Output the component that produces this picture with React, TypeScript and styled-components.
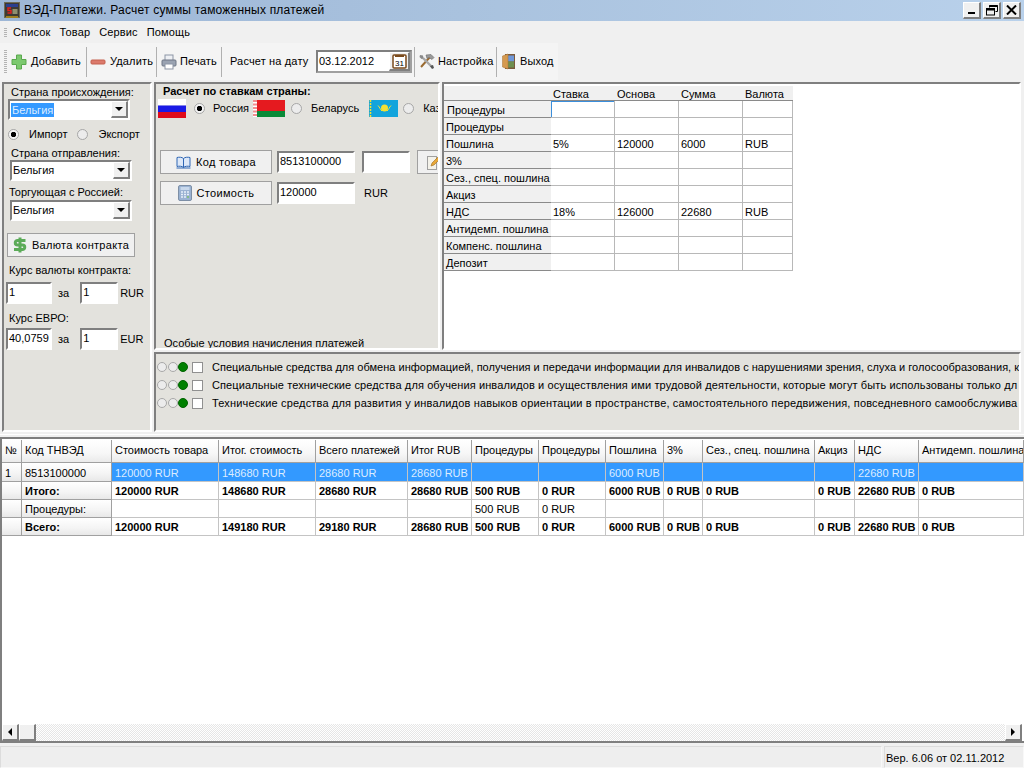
import React from 'react';
import styled, { createGlobalStyle, css } from 'styled-components';

const Global = createGlobalStyle`
  html, body { margin: 0; padding: 0; background: #f0f0f0; }
  * { box-sizing: border-box; }
  svg { flex: none; }
  body { font: 11px/13px "Liberation Sans", Arial, sans-serif; color: #000; }
`;

const sunken = css`
  border-style: solid;
  border-width: 2px;
  border-color: #7f7f7f #fff #fff #7f7f7f;
`;
const raised = css`
  border-style: solid;
  border-width: 1px 2px 2px 1px;
  border-color: #fff #7f7f7f #7f7f7f #fff;
`;

const Window = styled.div`
  width: 1024px;
  height: 768px;
  overflow: hidden;
  display: flex;
  flex-direction: column;
`;

/* ---- title bar ---- */
const TitleBar = styled.div`
  height: 21px;
  flex: none;
  display: flex;
  align-items: center;
  padding: 0 3px 0 4px;
  background: linear-gradient(90deg, #9db6d6 0%, #a9c2de 45%, #b9d1eb 100%);
`;
const TitleText = styled.span`
  margin-left: 4px;
  flex: 1;
  font-size: 12px;
  letter-spacing: 0.2px;
`;
const WinButton = styled.button`
  width: 18px;
  height: 17px;
  margin-left: 2px;
  padding: 0;
  background: #f0f0f0;
  ${raised}
  display: flex;
  align-items: center;
  justify-content: center;
`;

/* ---- menu and toolbar ---- */
const MenuBar = styled.div`
  height: 22px;
  flex: none;
  display: flex;
  align-items: center;
  padding: 1px 0 0 4px;
  background: #f0f0f0;
`;
const Grip = styled.i<{ $h: number }>`
  width: 3px;
  height: ${p => p.$h}px;
  flex: none;
  background: repeating-linear-gradient(#b4b4b4 0 1px, transparent 1px 2px);
`;
const MenuItem = styled.span`
  margin-left: 6px;
  margin-right: 3px;
  letter-spacing: 0.15px;
`;
const ToolBar = styled.div`
  height: 37px;
  width: 558px;
  flex: none;
  display: flex;
  align-items: center;
  padding-left: 4px;
  background: #f4f4f4;
`;
const ToolButton = styled.div<{ $w: number; $pad: number; $gap?: number }>`
  width: ${p => p.$w}px;
  height: 30px;
  flex: none;
  display: flex;
  align-items: center;
  gap: ${p => p.$gap ?? 3}px;
  padding-left: ${p => p.$pad}px;
  letter-spacing: 0.15px;
  white-space: nowrap;
`;
const ToolSep = styled.i`
  width: 1px;
  height: 30px;
  flex: none;
  background: #b0b0b0;
  margin-right: 1px;
`;
const DateEdit = styled.div`
  width: 96px;
  height: 23px;
  flex: none;
  display: flex;
  align-items: center;
  justify-content: space-between;
  padding-left: 1px;
  background: #fff;
  border-style: solid;
  border-width: 2px;
  border-color: #7f7f7f #a0a0a0 #a0a0a0 #7f7f7f;
`;
const DateBtn = styled.span`
  width: 21px;
  height: 19px;
  background: #f0f0f0;
  ${raised}
  display: flex;
  align-items: center;
  justify-content: center;
`;

/* ---- upper part ---- */
const Upper = styled.div`
  height: 355px;
  flex: none;
  display: flex;
  padding: 2px 3px 2px 2px;
  gap: 2px;
  background: #f0f0f0;
  border-bottom: 1px solid #fff;
`;
const LeftPanel = styled.div`
  width: 150px;
  flex: none;
  ${sunken}
  background: #e3e2dd;
  padding: 2px 0 0 4px;
  display: flex;
  flex-direction: column;
`;
const RightSide = styled.div`
  flex: 1;
  min-width: 0;
  display: flex;
  flex-direction: column;
  gap: 2px;
`;
const TopRow = styled.div`
  height: 268px;
  flex: none;
  display: flex;
  gap: 2px;
`;
const MidPanel = styled.div`
  width: 286px;
  flex: none;
  overflow: hidden;
  ${sunken}
  background: #e3e2dd;
  display: flex;
  flex-direction: column;
  padding: 0 0 0 2px;
`;
const FieldLabel = styled.div<{ $ml?: number; $mt?: number; $mb?: number }>`
  margin-left: ${p => p.$ml ?? 0}px;
  margin-top: ${p => p.$mt ?? 0}px;
  margin-bottom: ${p => p.$mb ?? 0}px;
  white-space: nowrap;
`;
const Combo = styled.div<{ $w: number; $ml?: number }>`
  width: ${p => p.$w}px;
  margin-left: ${p => p.$ml ?? 0}px;
  height: 21px;
  flex: none;
  ${sunken}
  background: #fff;
  display: flex;
  align-items: center;
  justify-content: space-between;
  padding-left: 1px;
`;
const Selected = styled.span`
  background: #3399ff;
  color: #dcecff;
  padding: 0 1px;
  line-height: 14px;
`;
const ComboBtn = styled.span`
  width: 17px;
  height: 17px;
  background: #f0f0f0;
  ${raised}
  display: flex;
  align-items: center;
  justify-content: center;
  &::after {
    content: '';
    border: 4px solid transparent;
    border-top: 4px solid #000;
    border-bottom: 0;
  }
`;
const RadioRow = styled.div<{ $mt?: number; $ml?: number }>`
  display: flex;
  align-items: center;
  margin-top: ${p => p.$mt ?? 0}px;
  margin-left: ${p => p.$ml ?? 0}px;
  white-space: nowrap;
`;
const Radio = styled.span<{ $on?: boolean; $ml: number; $mr: number }>`
  width: 11px;
  height: 11px;
  flex: none;
  margin-left: ${p => p.$ml}px;
  margin-right: ${p => p.$mr}px;
  border-radius: 50%;
  border: 1px solid #a6a6a6;
  background: ${p => (p.$on ? 'radial-gradient(circle, #000 0 2.4px, #f4f4f4 3px)' : '#ececec')};
`;
const FlagGap = styled.span<{ $w: number }>`
  width: ${p => p.$w}px;
  flex: none;
`;
const PushButton = styled.div<{ $w: number; $ml?: number; $mt?: number }>`
  width: ${p => p.$w}px;
  height: 24px;
  flex: none;
  margin-left: ${p => p.$ml ?? 0}px;
  margin-top: ${p => p.$mt ?? 0}px;
  background: #f0f0f0;
  border: 1px solid #a0a0a0;
  display: flex;
  align-items: center;
  justify-content: center;
  gap: 5px;
  letter-spacing: 0.3px;
  white-space: nowrap;
`;
const Row = styled.div<{ $mt?: number; $ml?: number }>`
  display: flex;
  align-items: center;
  margin-top: ${p => p.$mt ?? 0}px;
  margin-left: ${p => p.$ml ?? 0}px;
`;
const Edit = styled.div<{ $w: number; $ml?: number }>`
  width: ${p => p.$w}px;
  height: 22px;
  flex: none;
  margin-left: ${p => p.$ml ?? 0}px;
  ${sunken}
  background: #fff;
  padding: 1px 0 0 1px;
  line-height: 14px;
`;
const Unit = styled.span<{ $ml: number }>`
  margin-left: ${p => p.$ml}px;
`;
const PanelTitle = styled.div`
  margin: 1px 0 0 5px;
  font-weight: 700;
`;
const Spacer = styled.div`
  flex: 1;
`;
const FootNote = styled.div`
  margin: 0 0 -2px 6px;
  white-space: nowrap;
`;

/* ---- rate grid ---- */
const GridPanel = styled.div`
  flex: 1;
  min-width: 0;
  ${sunken}
  background: #fff;
  padding-top: 2px;
`;
const RateGrid = styled.div`
  width: 349px;
  display: grid;
  grid-template-columns: 107px 64px 64px 64px 50px;
  grid-auto-rows: 17px;
  grid-template-rows: 15px;
`;
const RateHead = styled.div`
  background: #f0f0f0;
  border-bottom: 1px solid #8a8a8a;
  padding: 1px 0 0 2px;
  line-height: 15px;
  overflow: hidden;
`;
const RateLabel = styled.div<{ $first?: boolean }>`
  background: #f0f0f0;
  border-bottom: 1px solid #8a8a8a;
  padding: 2px 0 0 ${p => (p.$first ? 3 : 2)}px;
  line-height: 14px;
  white-space: nowrap;
`;
const RateCell = styled.div<{ $focus?: boolean }>`
  border-right: 1px solid #b8b8b8;
  border-bottom: 1px solid #b8b8b8;
  padding: 2px 0 0 2px;
  line-height: 14px;
  ${p => p.$focus && css`box-shadow: inset 1px 1px 0 #3a8edb;`}
`;

/* ---- conditions ---- */
const CondPanel = styled.div`
  flex: 1;
  min-height: 0;
  overflow: hidden;
  ${sunken}
  background: #e3e2dd;
  padding: 4px 0 0 1px;
`;
const CondRow = styled.div`
  height: 18px;
  display: flex;
  align-items: center;
  white-space: nowrap;
`;
const Lamp = styled.span<{ $on?: boolean }>`
  width: 10px;
  height: 10px;
  flex: none;
  margin-right: 0.5px;
  border-radius: 50%;
  border: 1px solid ${p => (p.$on ? '#006400' : '#a8a8a8')};
  background: ${p => (p.$on ? '#008000' : '#ececec')};
`;
const CheckBox = styled.span`
  width: 11px;
  height: 11px;
  flex: none;
  margin: 0 9px 0 3.5px;
  background: #fff;
  border: 1px solid #909090;
`;
const CondText = styled.span<{ $ls: number }>`
  letter-spacing: ${p => p.$ls}px;
`;

/* ---- payments table ---- */
const TableBox = styled.div`
  height: 306px;
  flex: none;
  margin-top: 2px;
  background: #fff;
  border-style: solid;
  border-width: 2px 0 2px 2px;
  border-color: #7f7f7f;
  display: flex;
  flex-direction: column;
  overflow: hidden;
`;
const TableView = styled.div`
  flex: 1;
  overflow: hidden;
`;
const Table = styled.table`
  width: 1022px;
  margin-top: 1px;
  table-layout: fixed;
  border-collapse: separate;
  border-spacing: 0;
`;
const Th = styled.th`
  height: 23px;
  padding: 0 0 2px 3px;
  font-weight: 400;
  text-align: left;
  white-space: nowrap;
  overflow: hidden;
  background: linear-gradient(#fff, #f7f7f7 60%, #eaeaea);
  border-right: 1px solid #a0a0a0;
  border-bottom: 1px solid #a0a0a0;
`;
const Td = styled.td<{ $bold?: boolean; $sel?: boolean; $fixed?: boolean; $h: number }>`
  height: ${p => p.$h}px;
  padding: 2px 0 0 3px;
  white-space: nowrap;
  overflow: hidden;
  font-weight: ${p => (p.$bold ? 700 : 400)};
  background: ${p =>
    p.$sel ? '#3399ff' : p.$fixed ? 'linear-gradient(#fff, #f4f4f4 60%, #e8e8e8)' : '#fff'};
  color: ${p => (p.$sel ? '#dcecff' : '#000')};
  border-right: 1px solid ${p => (p.$fixed ? '#a0a0a0' : '#c4c4c4')};
  border-bottom: 1px solid ${p => (p.$fixed ? '#a0a0a0' : '#c4c4c4')};
`;
const ScrollBar = styled.div`
  height: 17px;
  flex: none;
  margin-right: 2px;
  display: flex;
  justify-content: space-between;
  background-color: #fff;
  background-image: conic-gradient(#e6e6e6 25%, #fff 0 50%, #e6e6e6 0 75%, #fff 0);
  background-size: 2px 2px;
`;
const ScrollThumb = styled.span`
  width: 17px;
  height: 17px;
  flex: none;
  background: #f0f0f0;
  ${raised}
  display: flex;
  align-items: center;
  justify-content: center;
`;
const ScrollGroup = styled.div`
  display: flex;
`;
const Arrow = styled.i<{ $dir: 'l' | 'r' }>`
  border: 4px solid transparent;
  ${p => (p.$dir === 'l'
    ? css`border-right: 4px solid #000; border-left: 0;`
    : css`border-left: 4px solid #000; border-right: 0;`)}
`;

/* ---- status bar ---- */
const StatusBar = styled.div`
  flex: 1;
  margin-top: 3px;
  display: flex;
  gap: 2px;
`;
const StatusCell = styled.div<{ $w?: number }>`
  ${p => (p.$w ? css`width: ${p.$w}px; flex: none;` : css`flex: 1;`)}
  background: #eeeeee;
  border-style: solid;
  border-width: 1px;
  border-color: #dcdcdc #f8f8f8 #f8f8f8 #dcdcdc;
  padding: 5px 0 0 1px;
`;

/* ---- icons ---- */
const AppIcon = () => (
  <svg width="16" height="17" viewBox="0 0 16 17">
    <rect x="0.5" y="0.5" width="15" height="15" fill="#3c3a34" stroke="#6f6a55" />
    <rect x="2" y="2" width="12" height="3" fill="#2b3f8f" />
    <path d="M7 6H4v2.500h3V11H3.500" fill="none" stroke="#e02020" strokeWidth="1.500" />
    <rect x="8.500" y="7" width="5" height="5" fill="#8f8f6f" />
    <rect x="2" y="14" width="12" height="2" fill="#a08020" />
  </svg>
);
const PlusIcon = () => (
  <svg width="16" height="16" viewBox="0 0 16 16">
    <path d="M5.5 1h5v4.500H15v5h-4.500V15h-5v-4.500H1v-5h4.500z" fill="#7cc96f" stroke="#5aa84e" />
  </svg>
);
const MinusIcon = () => (
  <svg width="16" height="16" viewBox="0 0 16 16">
    <rect x="1" y="6" width="14" height="4" rx="1" fill="#dc7a6c" stroke="#c4604f" />
  </svg>
);
const PrintIcon = () => (
  <svg width="16" height="16" viewBox="0 0 16 16">
    <rect x="4" y="1" width="8" height="6" fill="#eef0f4" stroke="#8c95a5" />
    <rect x="1" y="6" width="14" height="6" rx="1" fill="#9aa3b2" stroke="#6e7786" />
    <rect x="4" y="10" width="8" height="5" fill="#fff" stroke="#8c95a5" />
  </svg>
);
const ToolsIcon = () => (
  <svg width="17" height="17" viewBox="0 0 17 17">
    <path d="M3 14L12 4" stroke="#9a6a30" strokeWidth="2" />
    <path d="M8 2l5-.5 3 3-2 2-3-2-2 1z" fill="#9a9a9a" stroke="#6a6a6a" strokeWidth="0.6" />
    <path d="M14 14L5 5" stroke="#a8a8a8" strokeWidth="2.400" />
    <path d="M2 2l3 .5.500 3-2 .5-2-2z" fill="#8a8a8a" />
    <path d="M12 13l3-1 1 3-2 1z" fill="#555" />
  </svg>
);
const DoorIcon = () => (
  <svg width="14" height="17" viewBox="0 0 14 17">
    <rect x="3" y="1" width="10" height="15" fill="#7a5a3c" />
    <rect x="5" y="2.500" width="7" height="6" fill="#6f97d8" />
    <rect x="5" y="8.500" width="7" height="6" fill="#6f8f4f" />
    <path d="M0.500 3L6 1v15l-5.500-2z" fill="#d59a50" stroke="#a87030" strokeWidth="0.5" />
  </svg>
);
const CalendarIcon = () => (
  <svg width="15" height="15" viewBox="0 0 15 15">
    <rect x="1" y="1" width="13" height="13" rx="1" fill="#fff" stroke="#7a4a1c" strokeWidth="1.500" />
    <rect x="3" y="1" width="9" height="2" fill="#7a4a1c" />
    <text x="7.500" y="12" fontSize="8" textAnchor="middle" fontFamily="Liberation Sans">31</text>
  </svg>
);
const DollarIcon = () => (
  <svg width="14" height="16" viewBox="0 0 14 16">
    <path d="M7 0.500v15" stroke="#5cab58" strokeWidth="3" />
    <path d="M12.500 3.500H4.500a2.200 2.200 0 000 4.500h5a2.200 2.200 0 010 4.500H1" fill="none" stroke="#5cab58" strokeWidth="3" />
  </svg>
);
const BookIcon = () => (
  <svg width="15" height="13" viewBox="0 0 15 13">
    <path d="M7.500 2.500C6 1 3 1 1 1.500v9c2-.5 5-.5 6.500 1 1.500-1.500 4.500-1.500 6.500-1v-9c-2-.5-5-.5-6.500 1z" fill="#dde8f8" stroke="#2f66b5" />
    <path d="M7.500 2.500v9" stroke="#2f66b5" />
    <path d="M0.500 12h14" stroke="#2f66b5" />
  </svg>
);
const CalcIcon = () => (
  <svg width="14" height="16" viewBox="0 0 14 16">
    <rect x="0.500" y="0.500" width="13" height="15" rx="1.500" fill="#9ab2d2" stroke="#7d8fa6" />
    <rect x="2.500" y="2" width="9" height="3" fill="#c8d8ec" />
    <path d="M3 7h2M6 7h2M9 7h2M3 9.500h2M6 9.500h2M9 9.500h2M3 12h2M6 12h2" stroke="#e8f0fa" strokeWidth="1.400" />
    <path d="M9 12h2" stroke="#7fbf6f" strokeWidth="1.400" />
  </svg>
);
const PencilIcon = () => (
  <svg width="14" height="16" viewBox="0 0 14 16">
    <rect x="0.500" y="2.500" width="9" height="13" fill="#f4f2ea" stroke="#a0a0a0" />
    <path d="M4 12l1-3 7-7 2 2-7 7z" fill="#e8a838" stroke="#9a6a20" strokeWidth="0.6" />
  </svg>
);
const FlagRU = () => (
  <svg width="28" height="19" viewBox="0 0 28 19">
    <rect width="28" height="6.500" fill="#fff" />
    <rect y="6.500" width="28" height="6.500" fill="#1a1ae6" />
    <rect y="13" width="28" height="6" fill="#e00b1c" />
  </svg>
);
const FlagBY = () => (
  <svg width="32" height="17" viewBox="0 0 32 17">
    <rect width="32" height="11" fill="#e51a1f" />
    <rect y="11" width="32" height="6" fill="#0a8a38" />
    <rect width="4" height="17" fill="#fff" />
    <path d="M1 0v17M3 0v17" stroke="#e51a1f" strokeDasharray="2 1.500" />
  </svg>
);
const FlagKZ = () => (
  <svg width="29" height="17" viewBox="0 0 29 17">
    <rect width="29" height="17" fill="#12a4dc" />
    <circle cx="15.500" cy="8" r="3.500" fill="#f4e034" />
    <path d="M9 5.500c2 2 2 4 4 5.500M22 5.500c-2 2-2 4-4 5.500" stroke="#f4e034" fill="none" />
    <path d="M1.500 0v17" stroke="#f4e034" strokeDasharray="2 1" strokeWidth="1.500" />
  </svg>
);

/* ---- data ---- */
const rateRows: [string, string, string, string, string][] = [
  ['Процедуры', '', '', '', ''],
  ['Процедуры', '', '', '', ''],
  ['Пошлина', '5%', '120000', '6000', 'RUB'],
  ['3%', '', '', '', ''],
  ['Сез., спец. пошлина', '', '', '', ''],
  ['Акциз', '', '', '', ''],
  ['НДС', '18%', '126000', '22680', 'RUB'],
  ['Антидемп. пошлина', '', '', '', ''],
  ['Компенс. пошлина', '', '', '', ''],
  ['Депозит', '', '', '', ''],
];

const conditions = [
  { ls: 0.01, text: 'Специальные средства для обмена информацией, получения и передачи информации для инвалидов с нарушениями зрения, слуха и голосообразования, к' },
  { ls: 0.11, text: 'Специальные технические средства для обучения инвалидов и осуществления ими трудовой деятельности, которые могут быть использованы только дл' },
  { ls: 0.16, text: 'Технические средства для развития у инвалидов навыков ориентации в пространстве, самостоятельного передвижения, повседневного самообслужива' },
];

const colWidths = [20, 90, 107, 97, 92, 64, 67, 67, 58, 39, 112, 40, 64, 105];
const headers = ['№', 'Код ТНВЭД', 'Стоимость товара', 'Итог. стоимость', 'Всего платежей', 'Итог RUB', 'Процедуры', 'Процедуры', 'Пошлина', '3%', 'Сез., спец. пошлина', 'Акциз', 'НДС', 'Антидемп. пошлина'];
const rows: { cells: string[]; bold?: boolean; sel?: boolean; h: number }[] = [
  { h: 19, sel: true, cells: ['1', '8513100000', '120000 RUR', '148680 RUR', '28680 RUR', '28680 RUB', '', '', '6000 RUB', '', '', '', '22680 RUB', ''] },
  { h: 18, bold: true, cells: ['', 'Итого:', '120000 RUR', '148680 RUR', '28680 RUR', '28680 RUB', '500 RUB', '0 RUR', '6000 RUB', '0 RUB', '0 RUB', '0 RUB', '22680 RUB', '0 RUB'] },
  { h: 18, cells: ['', 'Процедуры:', '', '', '', '', '500 RUB', '0 RUR', '', '', '', '', '', ''] },
  { h: 18, bold: true, cells: ['', 'Всего:', '120000 RUR', '149180 RUR', '29180 RUR', '28680 RUB', '500 RUB', '0 RUR', '6000 RUB', '0 RUB', '0 RUB', '0 RUB', '22680 RUB', '0 RUB'] },
];

export default function App() {
  return (
    <Window>
      <Global />
      <TitleBar>
        <AppIcon />
        <TitleText>ВЭД-Платежи. Расчет суммы таможенных платежей</TitleText>
        <WinButton>
          <svg width="10" height="10" viewBox="0 0 10 10"><rect x="1" y="7" width="7" height="2" /></svg>
        </WinButton>
        <WinButton>
          <svg width="12" height="11" viewBox="0 0 12 11" fill="none" stroke="#000">
            <path d="M3.500 2.500v-2h8v6h-2" />
            <path d="M3.500 1h8" strokeWidth="2" />
            <rect x="0.500" y="3.500" width="8" height="6.500" />
            <path d="M0.500 4.500h8" strokeWidth="2" />
          </svg>
        </WinButton>
        <WinButton>
          <svg width="11" height="10" viewBox="0 0 11 10" stroke="#000" strokeWidth="2">
            <path d="M1 .5l9 9M10 .5l-9 9" />
          </svg>
        </WinButton>
      </TitleBar>

      <MenuBar>
        <Grip $h={10} />
        <MenuItem>Список</MenuItem>
        <MenuItem>Товар</MenuItem>
        <MenuItem>Сервис</MenuItem>
        <MenuItem>Помощь</MenuItem>
      </MenuBar>

      <ToolBar>
        <Grip $h={24} />
        <ToolButton $w={79} $pad={4} $gap={4}><PlusIcon />Добавить</ToolButton>
        <ToolSep />
        <ToolButton $w={68} $pad={2} $gap={4}><MinusIcon />Удалить</ToolButton>
        <ToolSep />
        <ToolButton $w={63} $pad={3}><PrintIcon />Печать</ToolButton>
        <ToolSep />
        <ToolButton $w={93} $pad={7}>Расчет на дату</ToolButton>
        <DateEdit>03.12.2012<DateBtn><CalendarIcon /></DateBtn></DateEdit>
        <ToolButton $w={2} $pad={0} />
        <ToolSep />
        <ToolButton $w={80} $pad={2}><ToolsIcon />Настройка</ToolButton>
        <ToolSep />
        <ToolButton $w={60} $pad={4} $gap={4}><DoorIcon />Выход</ToolButton>
      </ToolBar>

      <Upper>
        <LeftPanel>
          <FieldLabel $ml={3}>Страна происхождения:</FieldLabel>
          <Combo $w={122}><Selected>Бельгия</Selected><ComboBtn /></Combo>
          <RadioRow $mt={8}>
            <Radio $on $ml={0} $mr={10} />Импорт
            <Radio $ml={10} $mr={10} />Экспорт
          </RadioRow>
          <FieldLabel $ml={3} $mt={6}>Страна отправления:</FieldLabel>
          <Combo $w={122} $ml={2}>Бельгия<ComboBtn /></Combo>
          <FieldLabel $ml={1} $mt={5} $mb={1}>Торгующая с Россией:</FieldLabel>
          <Combo $w={122} $ml={2}>Бельгия<ComboBtn /></Combo>
          <PushButton $w={128} $ml={-1} $mt={12}><DollarIcon />Валюта контракта</PushButton>
          <FieldLabel $ml={1} $mt={7}>Курс валюты контракта:</FieldLabel>
          <Row $mt={5} $ml={-2}>
            <Edit $w={46}>1</Edit>
            <Unit $ml={6}>за</Unit>
            <Edit $w={38} $ml={11}>1</Edit>
            <Unit $ml={2}>RUR</Unit>
          </Row>
          <FieldLabel $ml={1} $mt={8}>Курс ЕВРО:</FieldLabel>
          <Row $mt={3} $ml={-2}>
            <Edit $w={46}>40,0759</Edit>
            <Unit $ml={6}>за</Unit>
            <Edit $w={38} $ml={11}>1</Edit>
            <Unit $ml={2}>EUR</Unit>
          </Row>
        </LeftPanel>

        <RightSide>
          <TopRow>
            <MidPanel>
              <PanelTitle>Расчет по ставкам страны:</PanelTitle>
              <RadioRow $mt={1}>
                <FlagRU />
                <Radio $on $ml={8} $mr={8} />Россия
                <FlagGap $w={4} />
                <FlagBY />
                <Radio $ml={6} $mr={9} />Беларусь
                <FlagGap $w={10} />
                <FlagKZ />
                <Radio $ml={5} $mr={9} />Каз
              </RadioRow>
              <Row $mt={32} $ml={2}>
                <PushButton $w={112}><BookIcon />Код товара</PushButton>
                <Edit $w={78} $ml={5}>8513100000</Edit>
                <Edit $w={48} $ml={7} />
                <PushButton $w={34} $ml={7}><PencilIcon /></PushButton>
              </Row>
              <Row $mt={7} $ml={2}>
                <PushButton $w={112}><CalcIcon />Стоимость</PushButton>
                <Edit $w={78} $ml={5}>120000</Edit>
                <Unit $ml={9}>RUR</Unit>
              </Row>
              <Spacer />
              <FootNote>Особые условия начисления платежей</FootNote>
            </MidPanel>
            <GridPanel>
              <RateGrid>
                <RateHead />
                <RateHead>Ставка</RateHead>
                <RateHead>Основа</RateHead>
                <RateHead>Сумма</RateHead>
                <RateHead>Валюта</RateHead>
                {rateRows.map((r, i) => (
                  <React.Fragment key={i}>
                    <RateLabel $first={i === 0}>{r[0]}</RateLabel>
                    <RateCell $focus={i === 0}>{r[1]}</RateCell>
                    <RateCell>{r[2]}</RateCell>
                    <RateCell>{r[3]}</RateCell>
                    <RateCell>{r[4]}</RateCell>
                  </React.Fragment>
                ))}
              </RateGrid>
            </GridPanel>
          </TopRow>
          <CondPanel>
            {conditions.map(c => (
              <CondRow key={c.text}>
                <Lamp /><Lamp /><Lamp $on />
                <CheckBox />
                <CondText $ls={c.ls}>{c.text}</CondText>
              </CondRow>
            ))}
          </CondPanel>
        </RightSide>
      </Upper>

      <TableBox>
        <TableView>
          <Table>
            <colgroup>
              {colWidths.map((w, i) => <col key={i} width={w} />)}
            </colgroup>
            <thead>
              <tr>{headers.map((h, i) => <Th key={i}>{h}</Th>)}</tr>
            </thead>
            <tbody>
              {rows.map((r, i) => (
                <tr key={i}>
                  {r.cells.map((c, j) => (
                    <Td key={j} $h={r.h} $fixed={j < 2} $sel={r.sel && j >= 2} $bold={r.bold}>{c}</Td>
                  ))}
                </tr>
              ))}
            </tbody>
          </Table>
        </TableView>
        <ScrollBar>
          <ScrollGroup>
            <ScrollThumb><Arrow $dir="l" /></ScrollThumb>
            <ScrollThumb />
          </ScrollGroup>
          <ScrollThumb><Arrow $dir="r" /></ScrollThumb>
        </ScrollBar>
      </TableBox>

      <StatusBar>
        <StatusCell />
        <StatusCell $w={140}>Вер. 6.06 от 02.11.2012</StatusCell>
      </StatusBar>
    </Window>
  );
}
